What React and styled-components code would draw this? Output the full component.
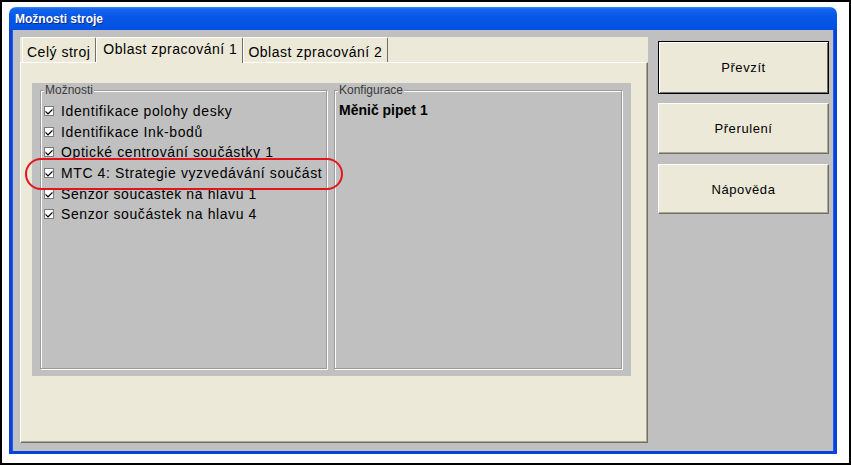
import React from "react";
import styled, { createGlobalStyle } from "styled-components";

const GlobalStyle = createGlobalStyle`
  html, body { margin: 0; padding: 0; background: #fff; }
  body { font-family: "Liberation Sans", Arial, sans-serif; }
  * { box-sizing: border-box; }
`;

const Screen = styled.div`
  width: 851px;
  height: 465px;
  border: 2px solid #000;
  background: #fff;
  padding: 5px 0 0 7px;
`;

const Window = styled.div`
  width: 828px;
  height: 447px;
  display: flex;
  flex-direction: column;
`;

const TitleBar = styled.div`
  height: 23px;
  flex: none;
  border-radius: 7px 7px 0 0;
  background: linear-gradient(#3d8ef8 0px, #1364ee 2px, #0a5ae8 8px, #0556e6 60%, #0350e0 100%);
  display: flex;
  align-items: center;
  padding-left: 6px;
  color: #fff;
  font: bold 12px "Liberation Sans", Arial, sans-serif;
  text-shadow: 1px 1px 0 #0a2a8a;
`;

const Body = styled.div`
  flex: 1;
  background: #c0c0c0;
  border: 3px solid #0842d8;
  border-top: none;
  box-shadow: inset 1px 0 0 #1a5cf0, inset -1px 0 0 #1a5cf0;
  display: flex;
  gap: 10px;
  padding: 7px 5px 8px 8px;
`;

const TabControl = styled.div`
  width: 628px;
  background: #ece9d8;
  display: flex;
  flex-direction: column;
`;

const TabStrip = styled.div`
  height: 25px;
  flex: none;
  display: flex;
  align-items: stretch;
  padding-left: 2px;
`;

const Tab = styled.div`
  height: ${(p) => (p.$active ? "26px" : "25px")};
  padding: ${(p) => (p.$active ? "0 5px 3px 6px" : "0 5px 0 4px")};
  display: flex;
  align-items: center;
  padding-top: ${(p) => (p.$active ? "0" : "3px")};
  font-size: 14px;
  letter-spacing: 0.5px;
  color: #000;
  background: #ece9d8;
  border-top: 1px solid #fff;
  border-left: 1px solid #fff;
  border-right: 1px solid #716f64;
  border-radius: 2px 2px 0 0;
  position: relative;
  z-index: ${(p) => (p.$active ? 2 : 1)};
  white-space: nowrap;
`;

const Panel = styled.div`
  flex: 1;
  position: relative;
  border-top: 1px solid #fff;
  border-left: 1px solid #fff;
  border-right: 1px solid #716f64;
  border-bottom: 1px solid #716f64;
  box-shadow: inset -1px -1px 0 #aca899;
  padding: 20px 0 0 11px;
`;

const GrayArea = styled.div`
  width: 599px;
  height: 293px;
  background: #c0c0c0;
  display: grid;
  grid-template-columns: 287px 288px;
  column-gap: 7px;
  padding: 7px 9px 7px 8px;
`;

const Group = styled.div`
  position: relative;
  border: 1px solid #9a9a9a;
  box-shadow: inset 1px 1px 0 #fff, 1px 1px 0 #fff;
  padding: ${(p) => p.$pad};
`;

const Legend = styled.span`
  position: absolute;
  top: -8px;
  left: 3px;
  padding: 0 1px 0 1px;
  background: #c0c0c0;
  font-size: 12px;
  line-height: 14px;
  color: #3a3a3a;
`;

const OptionList = styled.ul`
  list-style: none;
  margin: 0;
  padding: 0;
`;

const OptionRow = styled.li`
  height: 20.6px;
  display: flex;
  align-items: center;
  gap: 7px;
  font-size: 14px;
  letter-spacing: 0.6px;
  color: #000;
  white-space: nowrap;
`;

const CheckBox = styled.span`
  width: 10px;
  height: 10px;
  flex: none;
  background: #fff;
  border: 1px solid #7a7a7a;
  display: flex;
  align-items: center;
  justify-content: center;
`;

const ConfigText = styled.div`
  font-size: 14px;
  font-weight: bold;
  color: #000;
  line-height: 20px;
`;

const Highlight = styled.div`
  position: absolute;
  left: 4px;
  top: 95px;
  width: 318px;
  height: 32px;
  border: 2px solid #e3141c;
  border-radius: 16px;
  pointer-events: none;
`;

const ButtonColumn = styled.div`
  width: 171px;
  padding-top: 4px;
  display: flex;
  flex-direction: column;
`;

const Button = styled.button`
  height: ${(p) => p.$h}px;
  margin-top: ${(p) => p.$mt}px;
  width: 171px;
  background: #ece9d8;
  font-family: "Liberation Sans", Arial, sans-serif;
  font-size: 13px;
  letter-spacing: 0.6px;
  color: #000;
  padding: 0;
  border: 1px solid;
  border-color: ${(p) => (p.$default ? "#000" : "#fff #716f64 #716f64 #fff")};
  box-shadow: ${(p) =>
    p.$default
      ? "inset 1px 1px 0 #fff, inset -1px -1px 0 #716f64"
      : "inset -1px -1px 0 #aca899"};
  border-radius: 0;
`;

const Check = () => (
  <svg width="8" height="8" viewBox="0 0 8 8">
    <path d="M0.5 3.5 L3 6 L7.5 1.5 L7.5 3.2 L3 7.7 L0.5 5.2 Z" fill="#000" />
  </svg>
);

const options = [
  "Identifikace polohy desky",
  "Identifikace Ink-bodů",
  "Optické centrování součástky 1",
  "MTC 4: Strategie vyzvedávání součást",
  "Senzor součástek na hlavu 1",
  "Senzor součástek na hlavu 4",
];

export default function App() {
  return (
    <>
      <GlobalStyle />
      <Screen>
        <Window>
          <TitleBar>Možnosti stroje</TitleBar>
          <Body>
            <TabControl>
              <TabStrip>
                <Tab>Celý stroj</Tab>
                <Tab $active>Oblast zpracování 1</Tab>
                <Tab>Oblast zpracování 2</Tab>
              </TabStrip>
              <Panel>
                <GrayArea>
                  <Group $pad="10px 0 0 3px">
                    <Legend>Možnosti</Legend>
                    <OptionList>
                      {options.map((o) => (
                        <OptionRow key={o}>
                          <CheckBox>
                            <Check />
                          </CheckBox>
                          {o}
                        </OptionRow>
                      ))}
                    </OptionList>
                  </Group>
                  <Group $pad="9px 0 0 4px">
                    <Legend>Konfigurace</Legend>
                    <ConfigText>Měnič pipet 1</ConfigText>
                  </Group>
                </GrayArea>
                <Highlight />
              </Panel>
            </TabControl>
            <ButtonColumn>
              <Button $default $h={53} $mt={0}>Převzít</Button>
              <Button $h={51} $mt={9}>Přerulení</Button>
              <Button $h={50} $mt={10}>Nápověda</Button>
            </ButtonColumn>
          </Body>
        </Window>
      </Screen>
    </>
  );
}
